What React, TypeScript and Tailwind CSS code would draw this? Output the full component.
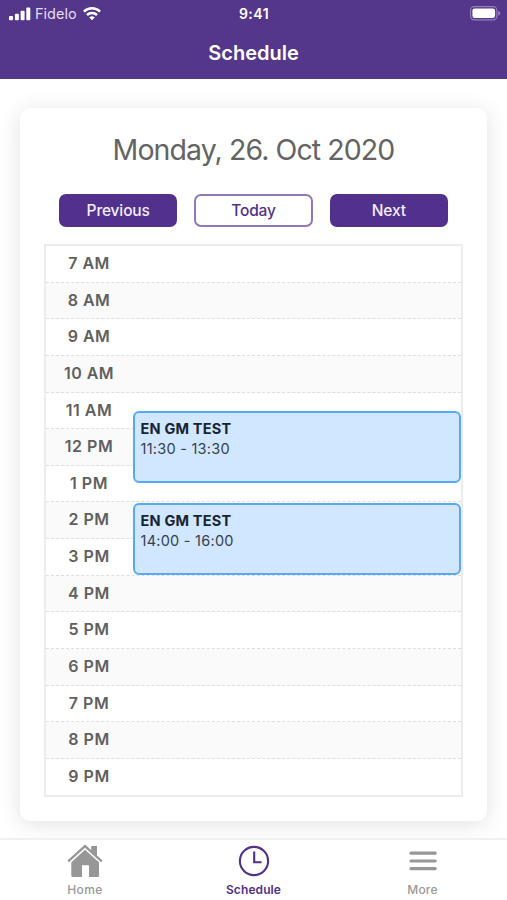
import React from 'react';

interface ScheduleEvent {
  id: number;
  title: string;
  time: string;
  position: string;
}

const hours = [
  '7 AM', '8 AM', '9 AM', '10 AM', '11 AM', '12 PM', '1 PM', '2 PM',
  '3 PM', '4 PM', '5 PM', '6 PM', '7 PM', '8 PM', '9 PM',
];

const events: ScheduleEvent[] = [
  { id: 1, title: 'EN GM TEST', time: '11:30 - 13:30', position: 'top-[165px]' },
  { id: 2, title: 'EN GM TEST', time: '14:00 - 16:00', position: 'top-[256.5px]' },
];

const SignalIcon = () => (
  <svg width="22" height="14" viewBox="0 0 22 14" fill="white">
    <rect x="0" y="9" width="4" height="4.3" rx="1" />
    <rect x="5.9" y="6.8" width="4" height="6.5" rx="1" />
    <rect x="11.6" y="3.8" width="4" height="9.5" rx="1" />
    <rect x="17.3" y="0.4" width="4" height="12.9" rx="1" />
  </svg>
);

const WifiIcon = () => (
  <svg width="18" height="14" viewBox="0 0 18 14" fill="none" stroke="white" strokeWidth="2.5">
    <path d="M0.9 4.6a11.6 11.6 0 0 1 16.2 0" />
    <path d="M4 8a7.2 7.2 0 0 1 10 0" />
    <path d="M9 13.3 6.2 10.5a4 4 0 0 1 5.6 0Z" fill="white" stroke="none" />
  </svg>
);

const BatteryIcon = () => (
  <svg width="31" height="15" viewBox="0 0 31 15">
    <rect x="0.6" y="0.6" width="26.3" height="13.3" rx="3.8" fill="none" stroke="#9580bf" strokeWidth="1.1" />
    <rect x="2.4" y="2.4" width="22.7" height="9.7" rx="2.3" fill="white" />
    <path d="M28.2 4.9c1.6.6 2.1 1.4 2.1 2.4s-.5 1.8-2.1 2.4z" fill="#9580bf" />
  </svg>
);

const HomeIcon = () => (
  <svg width="36" height="34" viewBox="0 0 36 34" fill="#979797">
    <path d="M1.2 17.4 18 2.1l16.8 15.3" fill="none" stroke="#979797" strokeWidth="2.3" />
    <path d="M24.2 2H30v10.2l-5.8-5.3z" />
    <path d="M18 5.7 32 18.2v13.3a1.5 1.5 0 0 1-1.5 1.5H22V21.2h-7V33H5.8a1.5 1.5 0 0 1-1.5-1.5V18.2z" />
  </svg>
);

const ClockIcon = () => (
  <svg width="32" height="32" viewBox="0 0 32 32" fill="none" stroke="#51318b" strokeWidth="2.1">
    <circle cx="16" cy="16" r="14.1" />
    <path d="M16.2 6.4v10.8h7.4" />
  </svg>
);

const MenuIcon = () => (
  <svg width="28" height="20" viewBox="0 0 28 20" stroke="#979797" strokeWidth="3.2" strokeLinecap="round">
    <path d="M2 2.2h24.2M2 10h24.2M2 17.6h24.2" />
  </svg>
);

const Header = () => (
  <header className="h-[79px] bg-[#54368b] text-white">
    <div className="grid h-[27px] grid-cols-3 items-center pl-[9px] pr-[6px]">
      <div className="flex items-center">
        <SignalIcon />
        <span className="ml-[4px] mr-[6px] text-[14.5px] leading-5 text-[#e5dcf2]">Fidelo</span>
        <WifiIcon />
      </div>
      <span className="-ml-[2px] text-center text-[14px] font-semibold tracking-[0.5px]">9:41</span>
      <div className="flex justify-end">
        <BatteryIcon />
      </div>
    </div>
    <h1 className="mt-[12px] text-center text-[20px] leading-7 font-semibold">Schedule</h1>
  </header>
);

const Calendar = () => (
  <div className="relative mx-auto mt-[17px] w-[419px] border-2 border-[#ececec]">
    <div>
      {hours.map((hour) => (
        <div
          key={hour}
          className="h-[36.64px] border-b border-dashed border-[#dedede] text-[16px] font-semibold text-[#606060] last:border-b-0 even:bg-[#fafafa]"
        >
          <div className="w-[86px] text-center leading-[34px] tracking-[0.5px]">{hour}</div>
        </div>
      ))}
    </div>
    {events.map((event) => (
      <div
        key={event.id}
        className={`absolute right-0 left-[86.5px] h-[72px] rounded-[6px] border-2 border-[#58a8f2] bg-[#d0e7ff] px-[6px] pt-[6px] ${event.position}`}
      >
        <p className="text-[14.5px] leading-[20px] font-bold tracking-[0.2px] text-[#172431]">{event.title}</p>
        <p className="text-[14.5px] leading-[20px] tracking-[0.25px] text-[#34414e]">{event.time}</p>
      </div>
    ))}
  </div>
);

const TabBar = () => (
  <nav className="grid h-[62px] grid-cols-3 border-t-2 border-[#f1f1f1] bg-white text-[12px] font-medium text-[#999999]">
    <div className="flex flex-col items-center pt-[4px] pl-[1px]">
      <HomeIcon />
      <span className="mt-[4px] leading-4 tracking-[0.4px]">Home</span>
    </div>
    <div className="flex flex-col items-center pt-[5px] text-[#51318b]">
      <ClockIcon />
      <span className="mt-[5px] leading-4 font-semibold tracking-[0.1px]">Schedule</span>
    </div>
    <div className="flex flex-col items-center pt-[11px]">
      <MenuIcon />
      <span className="mt-[11px] leading-4 tracking-[0.2px]">More</span>
    </div>
  </nav>
);

const App: React.FC = () => {
  return (
    <div className="flex h-[900px] w-[507px] flex-col overflow-hidden bg-white font-['Inter',sans-serif]">
      <Header />
      <main className="flex-1 px-[20px] pt-[29px]">
        <section className="h-[713px] rounded-[10px] bg-white pt-[22px] shadow-[0_3px_22px_rgba(0,0,0,0.12)]">
          <h2 className="text-center text-[28.5px] leading-[40px] tracking-[-0.92px] text-[#646464]">
            Monday, 26. Oct 2020
          </h2>
          <div className="mx-auto mt-[24px] grid w-[389px] grid-cols-3 gap-[17px] text-[15.5px] font-medium tracking-[-0.15px]">
            <button className="h-[33px] rounded-[7px] bg-[#51318b] text-[#f4edff]">Previous</button>
            <button className="h-[33px] rounded-[7px] border-2 border-[#8f7ab7] text-[#51318b]">Today</button>
            <button className="h-[33px] rounded-[7px] bg-[#51318b] text-[#f4edff]">Next</button>
          </div>
          <Calendar />
        </section>
      </main>
      <TabBar />
    </div>
  );
};

export default App;
